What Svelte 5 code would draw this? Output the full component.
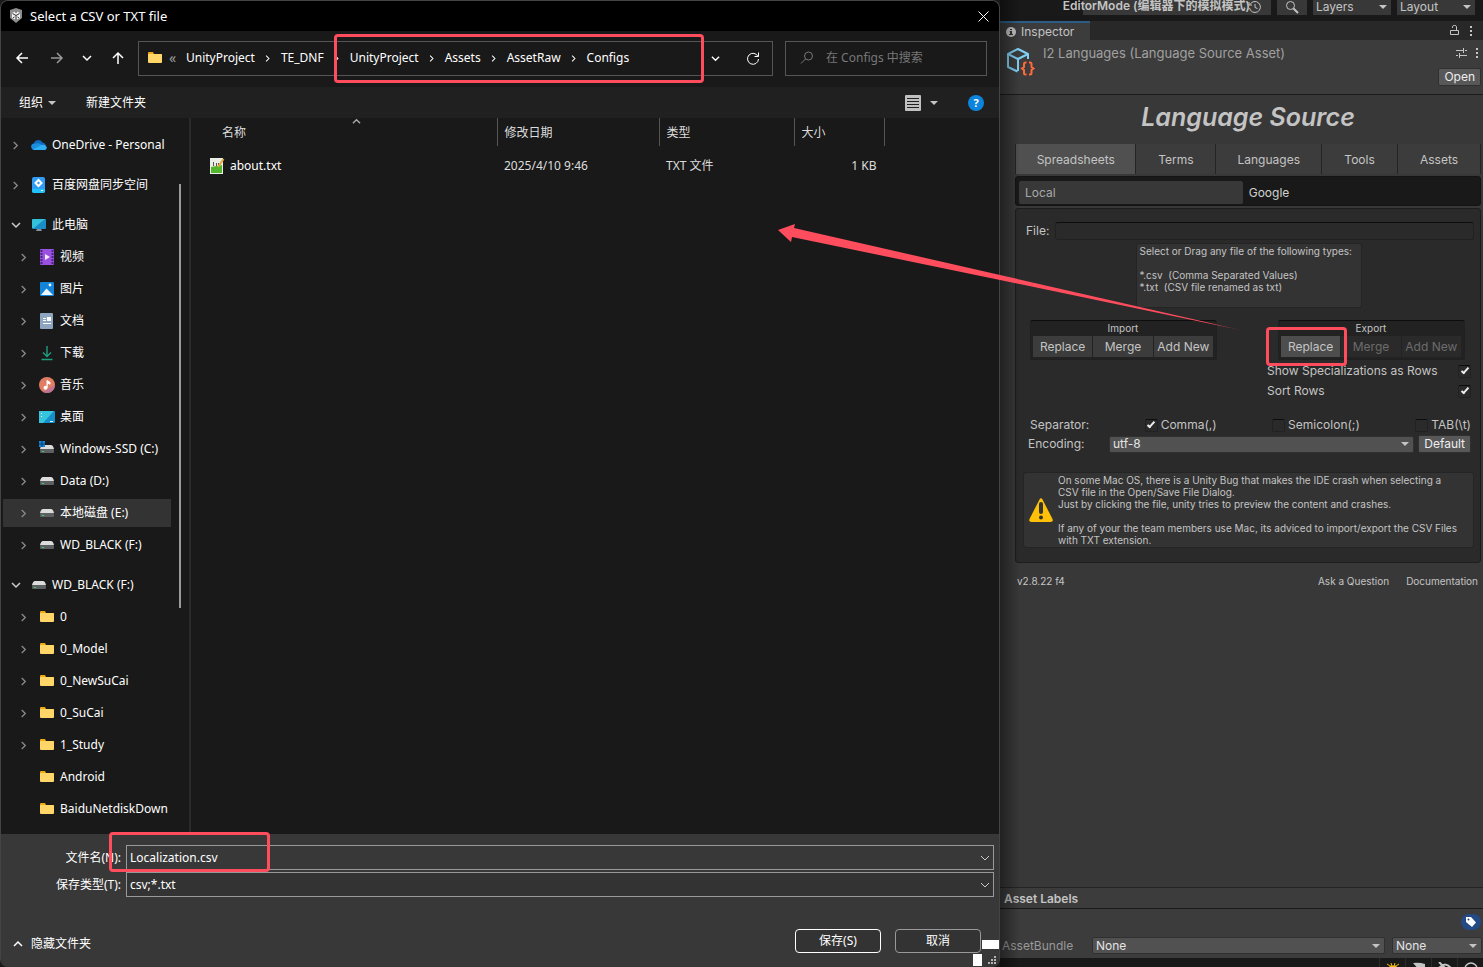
<script lang="ts">
	type TreeItem = { label: string; icon: string; state?: 'open' | 'closed' | 'none'; selected?: boolean };

	const treeGroups: TreeItem[][] = [
		[{ label: 'OneDrive - Personal', icon: 'cloud' }],
		[{ label: '百度网盘同步空间', icon: 'baidu' }],
		[
			{ label: '此电脑', icon: 'pc', state: 'open' },
			{ label: '视频', icon: 'video' },
			{ label: '图片', icon: 'picture' },
			{ label: '文档', icon: 'document' },
			{ label: '下载', icon: 'download' },
			{ label: '音乐', icon: 'music' },
			{ label: '桌面', icon: 'desktop' },
			{ label: 'Windows-SSD (C:)', icon: 'ssd' },
			{ label: 'Data (D:)', icon: 'drive' },
			{ label: '本地磁盘 (E:)', icon: 'drive', selected: true },
			{ label: 'WD_BLACK (F:)', icon: 'drive' }
		],
		[
			{ label: 'WD_BLACK (F:)', icon: 'drive', state: 'open' },
			{ label: '0', icon: 'folder' },
			{ label: '0_Model', icon: 'folder' },
			{ label: '0_NewSuCai', icon: 'folder' },
			{ label: '0_SuCai', icon: 'folder' },
			{ label: '1_Study', icon: 'folder' },
			{ label: 'Android', icon: 'folder', state: 'none' },
			{ label: 'BaiduNetdiskDown', icon: 'folder', state: 'none' }
		]
	];

	const crumbs = ['UnityProject', 'TE_DNF', 'UnityProject', 'Assets', 'AssetRaw', 'Configs'];
	const pageTabs = [
		{ label: 'Spreadsheets', grow: 121 },
		{ label: 'Terms', grow: 80 },
		{ label: 'Languages', grow: 106 },
		{ label: 'Tools', grow: 76 },
		{ label: 'Assets', grow: 83 }
	];
	const actions = ['Replace', 'Merge', 'Add New'];

	let fileName = $state('Localization.csv');
	let search = $state('');
	let csvPath = $state('');
	let activeTab = $state('Spreadsheets');
	let showSpecializations = $state(true);
	let sortRows = $state(true);
	let separator = $state(',');
</script>

{#snippet icon(name: string)}
	<svg class="icon" width="16" height="16" viewBox="0 0 16 16" aria-hidden="true">
		{#if name === 'cloud'}
			<path d="M3.5 13A3.5 3.5 0 0 1 2.6 6.2A5 5 0 0 1 11.5 5.4A4 4 0 0 1 12.5 13Z" fill="#0f6cbd" />
			<path d="M3.5 13A3.5 3.5 0 0 1 1 7.5L7 6L15.5 10A3 3 0 0 1 12.5 13Z" fill="#1b8fe0" />
			<path d="M2 12.5L10 8.2A4 4 0 0 1 15.8 10.5A2.7 2.7 0 0 1 13 13H3.5Z" fill="#2fb0f5" />
		{:else if name === 'baidu'}
			<rect x="1" y="0" width="13" height="16" rx="2" fill="#2f9df7" />
			<path d="M1 12h13v2a2 2 0 0 1-2 2H3a2 2 0 0 1-2-2z" fill="#20c3ff" />
			<path d="M7.5 3l3 3-3 3-3-3z" fill="none" stroke="#fff" stroke-width="2" />
			<rect x="10" y="13" width="2" height="1" fill="#fff" />
		{:else if name === 'pc'}
			<rect x="1" y="2" width="14" height="10" rx="1" fill="#1a8cc8" />
			<path d="M2 2h12L3 11H1V3z" fill="#33c1da" />
			<path d="M6 12h4l1 2H5z" fill="#8a8f94" />
		{:else if name === 'video'}
			<rect x="1" y="0" width="14" height="16" rx="1" fill="#9b51e0" />
			<path d="M2.5 1v14M13.5 1v14" stroke="#4b2480" stroke-width="2" stroke-dasharray="2 1" />
			<path d="M6 5v6l5-3z" fill="#f3e8ff" />
		{:else if name === 'picture'}
			<rect x="1" y="1" width="14" height="14" rx="1" fill="#1484d8" />
			<path d="M2 14l5.5-6.5L14 14z" fill="#eef7ff" />
			<circle cx="11" cy="4" r="1.4" fill="#eef7ff" />
		{:else if name === 'document'}
			<rect x="1" y="0" width="13" height="16" rx="1" fill="#8ea6bf" />
			<path d="M4 5.5h3M4 7.5h3M4 10.5h8" stroke="#fff" />
			<rect x="8" y="4" width="4" height="4" fill="#fff" />
		{:else if name === 'download'}
			<path d="M8 1v10M4 7.5l4 4 4-4M2.5 14.5h11" fill="none" stroke="#1f9e7e" stroke-width="1.4" />
		{:else if name === 'music'}
			<circle cx="8" cy="8" r="8" fill="#e07d62" />
			<path d="M16 8a8 8 0 0 1-12 7z" fill="#b070a8" opacity="0.7" />
			<circle cx="6.5" cy="10.7" r="2" fill="#fff" />
			<path d="M8 11V3.5l3 1.8v2L9 6" fill="#fff" stroke="#fff" />
		{:else if name === 'desktop'}
			<rect x="0" y="2" width="16" height="12" rx="1" fill="#158fca" />
			<path d="M0 2h15L4 14H0z" fill="#36c5dc" />
			<path d="M2 4.5h1M2 7.5h1M11 12.5h3" stroke="#eafcff" />
		{:else if name === 'ssd' || name === 'drive'}
			<path d="M4 4h8q2 0 3 4H1q1-4 3-4z" fill="#dcdcdc" />
			<rect x="1" y="8" width="14" height="4" rx="1" fill="#5e6163" />
			<rect x="3" y="10" width="2" height="1" fill="#3fd65a" />
			{#if name === 'ssd'}
				<path d="M0 0h6v6H0z" fill="#1683d8" />
				<path d="M3 0v6M0 3h6" stroke="#0b3f6c" />
			{/if}
		{:else if name === 'folder'}
			<path d="M1 3q0-1 1-1h4l1 2h7q1 0 1 1v2H1z" fill="#f0a81c" />
			<rect x="1" y="4" width="14" height="9" rx="1" fill="#ffd667" />
		{:else if name === 'text-file'}
			<path d="M1 0h13v16H1z" fill="#e9efe6" />
			<path d="M2 9l11-2v8H2z" fill="#53b52b" />
			<path d="M4.5 4v4M7.5 5v3M9.5 5v3" stroke="#555" />
			<path d="M14.5 1L9 9" stroke="#e5a93b" stroke-width="2" />
		{/if}
	</svg>
{/snippet}

{#snippet chevron(dir: string, size: number)}
	<svg class="chevron {dir}" width={size} height={size} viewBox="0 0 10 10" aria-hidden="true">
		<path d="M1 3l4 4 4-4" />
	</svg>
{/snippet}

{#snippet kebab()}
	<svg width="4" height="12" viewBox="0 0 4 12" aria-hidden="true">
		<path d="M1 1h2v2H1zM1 5h2v2H1zM1 9h2v2H1z" fill="#c4c4c4" />
	</svg>
{/snippet}

<div class="screen">
	<section class="dialog">
		<header class="title-bar">
			<svg width="14" height="16" viewBox="0 0 14 16" aria-hidden="true">
				<path d="M1 2l6-2 6 2v8l-6 5-6-5z" fill="#8d8d8d" />
				<path d="M7 3l4 2v5l-4 2-4-2V5z" fill="#efefef" />
				<path d="M3.5 5.5L7 7.5l3.5-2M7 7.5V12M7 3v2M4 10l1.5-1M10 10L8.5 9" stroke="#333" fill="none" />
			</svg>
			<h1>Select a CSV or TXT file</h1>
			<button class="close" aria-label="关闭">
				<svg width="11" height="11" viewBox="0 0 11 11"><path d="M.5.5l10 10M10.5.5l-10 10" stroke="#fff" /></svg>
			</button>
		</header>

		<nav class="nav-bar">
			<button class="wide" aria-label="返回">
				<svg width="14" height="14" viewBox="0 0 14 14"><path d="M13 7H2M7 2L2 7l5 5" /></svg>
			</button>
			<button class="forward dim" aria-label="前进">
				<svg width="14" height="14" viewBox="0 0 14 14"><path d="M1 7h11M7 2l5 5-5 5" /></svg>
			</button>
			<button class="narrow" aria-label="最近浏览的位置">{@render chevron('down', 10)}</button>
			<button class="wide" aria-label="上移">
				<svg width="14" height="14" viewBox="0 0 14 14"><path d="M7 13V2M2 7l5-5 5 5" /></svg>
			</button>
			<div class="address">
				{@render icon('folder')}
				<span class="overflow">«</span>
				{#each crumbs as crumb, i}
					{#if i > 0}
						<span class="crumb-sep">{@render chevron('right', 7)}</span>
					{/if}
					<a href="#{crumb}">{crumb}</a>
				{/each}
				<div class="address-tools">
					<button aria-label="以前的位置">{@render chevron('down', 9)}</button>
					<button class="refresh" aria-label="刷新">
						<svg width="14" height="14" viewBox="0 0 14 14"><path d="M12 5.5A5.5 5.5 0 1 0 12.5 8M12.5 1.5v4h-4" /></svg>
					</button>
				</div>
				<div class="mark mark-path"></div>
			</div>
			<label class="search">
				<svg width="14" height="14" viewBox="0 0 14 14"><circle cx="8.5" cy="5" r="4" /><path d="M5.5 8L1 12.5" /></svg>
				<input type="text" placeholder="在 Configs 中搜索" aria-label="搜索" bind:value={search} />
			</label>
		</nav>

		<div class="command-bar">
			<button>组织 <span class="caret"></span></button>
			<button>新建文件夹</button>
			<button class="view" aria-label="更改视图">
				<svg width="16" height="16" viewBox="0 0 16 16">
					<rect width="16" height="16" rx="1" fill="#c0c0c0" />
					<path d="M2 3.5h12M2 6.5h12M2 9.5h12M2 12.5h12" stroke="#202020" />
				</svg>
				<span class="caret"></span>
			</button>
			<button class="help" aria-label="帮助">?</button>
		</div>

		<div class="browser">
			<aside>
				<div class="tree">
					{#each treeGroups as group, g}
						<ul>
							{#each group as item, i}
								<li class:child={g > 1 && i > 0} class:selected={item.selected}>
									<span class="twist {item.state ?? 'closed'}">
										{@render chevron(item.state === 'open' ? 'down' : 'right', item.state === 'open' ? 10 : 9)}
									</span>
									{@render icon(item.icon)}
									<span class="name">{item.label}</span>
								</li>
							{/each}
						</ul>
					{/each}
				</div>
				<div class="scroll-thumb"></div>
			</aside>

			<div class="files">
				<table>
					<thead>
						<tr>
							<th class="col-name">名称<span class="sort">{@render chevron('up', 9)}</span></th>
							<th class="col-date">修改日期</th>
							<th class="col-type">类型</th>
							<th class="col-size">大小</th>
						</tr>
					</thead>
					<tbody>
						<tr>
							<td class="file-name"><span>{@render icon('text-file')}about.txt</span></td>
							<td>2025/4/10 9:46</td>
							<td>TXT 文件</td>
							<td class="size">1 KB</td>
						</tr>
					</tbody>
				</table>
			</div>
		</div>

		<footer class="save-area">
			<div class="save-fields">
				<label for="file-name">文件名(N):</label>
				<div class="combo">
					<input id="file-name" type="text" bind:value={fileName} />
					{@render chevron('down', 10)}
				</div>
				<label for="file-type">保存类型(T):</label>
				<div class="combo type">
					<select id="file-type"><option>csv;*.txt</option></select>
					{@render chevron('down', 10)}
				</div>
				<div class="mark mark-name"></div>
			</div>
			<div class="save-actions">
				<button class="hide-folders">{@render chevron('up', 10)}隐藏文件夹</button>
				<button class="action primary">保存(S)</button>
				<button class="action">取消</button>
			</div>
			<i class="patch patch-side"></i>
			<i class="patch patch-bottom"></i>
			<svg class="grip" width="8" height="8" viewBox="0 0 8 8" aria-hidden="true">
				<path d="M6 0h2v2H6zM6 3h2v2H6zM6 6h2v2H6zM3 3h2v2H3zM3 6h2v2H3zM0 6h2v2H0z" fill="#b4b4b4" />
			</svg>
		</footer>
	</section>

	<section class="inspector">
		<div class="editor-bar">
			<strong>EditorMode (编辑器下的模拟模式)</strong>
			<button class="history" aria-label="History">
				<svg width="14" height="14" viewBox="0 0 14 14"><path d="M2 4.5A5.5 5.5 0 1 1 1.5 8M1 2v3h3M7 4v3.5l2.5 1" /></svg>
			</button>
			<button class="find" aria-label="Search">
				<svg width="14" height="14" viewBox="0 0 14 14"><circle cx="5.5" cy="5.5" r="4" /><path d="M8.5 8.5l4.5 4.5" stroke-width="2" /></svg>
			</button>
			<div class="drop"><select aria-label="Layers"><option>Layers</option></select><span class="caret"></span></div>
			<div class="drop"><select aria-label="Layout"><option>Layout</option></select><span class="caret"></span></div>
		</div>

		<div class="dock-tabs">
			<button class="dock-tab">
				<svg width="10" height="10" viewBox="0 0 10 10"><circle cx="5" cy="5" r="5" fill="#c4c4c4" /><path d="M4 2h2v1H4zM4 4h2v3h1v1H3V7h1V5H3.5z" fill="#333" /></svg>
				Inspector
			</button>
			<svg class="lock" width="9" height="11" viewBox="0 0 9 11" aria-hidden="true">
				<path d="M.5 5.5h8v4h-8zM2.5 3V1.5q0-1 2-1t2 1v4" fill="none" stroke="#c4c4c4" />
			</svg>
			{@render kebab()}
		</div>

		<header class="asset-header">
			<svg width="30" height="30" viewBox="0 0 30 30" aria-hidden="true">
				<path d="M11.5 24.5L2 20V7l10-5 10 5v5M2 7l10 5 10-5M12 12v12" fill="none" stroke="#7fd0f5" stroke-width="2" stroke-linejoin="round" />
				<path d="M20.5 15.500h-1q-1.500 0-1.500 1.500v3l-2 1.500 2 1.500v3q0 1.500 1.500 1.500h1M23 15.500h1q1.500 0 1.500 1.500v3l2 1.500-2 1.500v3q0 1.500-1.500 1.500h-1" fill="none" stroke="#ff6a3a" stroke-width="2" />
			</svg>
			<h2>I2 Languages (Language Source Asset)</h2>
			<div class="asset-tools">
				<div class="asset-icons">
					<svg width="11" height="10" viewBox="0 0 11 10" aria-hidden="true"><path d="M0 2.5h7M9 2.5h2M7.500 0v5M0 7.500h2M4 7.500h7M3.500 5v5" stroke="#c4c4c4" /></svg>
					{@render kebab()}
				</div>
				<button class="unity-btn">Open</button>
			</div>
		</header>

		<div class="content">
			<h3>Language Source</h3>
			<div class="page-tabs">
				{#each pageTabs as tab}
					<button style="flex-grow: {tab.grow}" class:active={tab.label === activeTab} onclick={() => (activeTab = tab.label)}>
						{tab.label}
					</button>
				{/each}
			</div>
			<div class="source-tabs">
				<button class="active">Local</button>
				<button>Google</button>
			</div>

			<div class="panel">
				<div class="file-row">
					<label for="csv-path">File:</label>
					<input id="csv-path" type="text" bind:value={csvPath} />
				</div>
				<pre class="hint">Select or Drag any file of the following types:

*.csv  (Comma Separated Values)
*.txt  (CSV file renamed as txt)</pre>

				<div class="transfer">
					<fieldset class="transfer-box">
						<legend>Import</legend>
						<div>
							{#each actions as action}
								<button>{action}</button>
							{/each}
						</div>
					</fieldset>
					<fieldset class="transfer-box">
						<legend>Export</legend>
						<div>
							{#each actions as action, i}
								<button class:hover={i === 0} disabled={i > 0}>{action}</button>
							{/each}
						</div>
						<div class="mark mark-replace"></div>
					</fieldset>
				</div>

				<div class="options">
					<label>Show Specializations as Rows <input type="checkbox" bind:checked={showSpecializations} /></label>
					<label>Sort Rows <input type="checkbox" bind:checked={sortRows} /></label>
				</div>

				<div class="separator-row">
					<span>Separator:</span>
					<label><input type="checkbox" checked={separator === ','} onchange={() => (separator = ',')} />Comma(,)</label>
					<label><input type="checkbox" checked={separator === ';'} onchange={() => (separator = ';')} />Semicolon(;)</label>
					<label><input type="checkbox" checked={separator === '\t'} onchange={() => (separator = '\t')} />TAB(\t)</label>
				</div>
				<div class="encoding-row">
					<label for="encoding">Encoding:</label>
					<div class="drop light"><select id="encoding"><option>utf-8</option></select><span class="caret"></span></div>
					<button class="unity-btn">Default</button>
				</div>

				<div class="warning">
					<svg width="24" height="24" viewBox="0 0 24 24" aria-hidden="true">
						<path d="M10.5 1.5q1.5-2.5 3 0L23.5 21q1 3-2 3h-19q-3 0-2-3z" fill="#ffc107" />
						<path d="M12 6v8" stroke="#333" stroke-width="4" stroke-linecap="round" />
						<circle cx="12" cy="19.5" r="2" fill="#333" />
					</svg>
					<p>
						On some Mac OS, there is a Unity Bug that makes the IDE crash when selecting a<br />CSV file in the Open/Save File Dialog.<br />
						Just by clicking the file, unity tries to preview the content and crashes.<br /><br />
						If any of your the team members use Mac, its adviced to import/export the CSV Files<br />with TXT extension.
					</p>
				</div>
			</div>

			<div class="links">
				<span>v2.8.22 f4</span>
				<a href="#ask">Ask a Question</a>
				<a href="#docs">Documentation</a>
			</div>
		</div>

		<div class="asset-labels">
			<h4>Asset Labels</h4>
			<button class="tag" aria-label="Labels">
				<svg width="10" height="10" viewBox="0 0 10 10"><path d="M0 0h5l5 5.5L6 10 0 5z" fill="#fff" /><circle cx="2.5" cy="2.5" r="1" fill="#234a85" /></svg>
			</button>
			<div class="bundle">
				<label for="bundle">AssetBundle</label>
				<div class="drop light"><select id="bundle"><option>None</option></select><span class="caret"></span></div>
				<div class="drop light variant"><select aria-label="Variant"><option>None</option></select><span class="caret"></span></div>
			</div>
		</div>

		<div class="status">
			<span><svg width="14" height="14" viewBox="0 0 14 14"><path d="M1 2l3 2M13 2l-3 2M4 4h6v8H4zM0 7h14M5 1l1 3M9 1L8 4" fill="#f5b80c" stroke="#f5b80c" /></svg></span>
			<span><svg width="14" height="14" viewBox="0 0 14 14"><path d="M1 1q6-1 12 1v4l-5 3z" fill="#c4c4c4" /></svg></span>
			<span><svg width="14" height="14" viewBox="0 0 14 14"><path d="M1 6q6-7 12 0M1 0l12 12" fill="none" stroke="#c4c4c4" stroke-width="2" /></svg></span>
			<span><svg width="14" height="14" viewBox="0 0 14 14"><circle cx="7" cy="7" r="6" fill="none" stroke="#c4c4c4" stroke-width="1.5" /></svg></span>
		</div>
	</section>

	<svg class="arrow" width="468" height="110" viewBox="0 0 468 110" aria-hidden="true">
		<defs>
			<linearGradient id="fade"><stop offset="0.93" stop-color="#ff4d5e" /><stop offset="1" stop-color="#ff4d5e" stop-opacity="0.1" /></linearGradient>
		</defs>
		<path d="M0 6L17 0L16 4L222 51L467 107L222 56L14 13L13 18Z" fill="url(#fade)" />
	</svg>
</div>

<style>
	:global(body) {
		margin: 0;
		background: #191919;
	}

	.screen {
		position: relative;
		display: grid;
		grid-template-columns: minmax(0, 1000fr) minmax(0, 483fr);
		min-height: 100vh;
		overflow: hidden;
		color: #fff;
		font-family: 'Noto Sans', 'Noto Sans CJK SC', sans-serif;
		font-size: 12px;
		line-height: 16px;
	}

	.screen * {
		box-sizing: border-box;
	}

	button,
	input,
	select {
		margin: 0;
		padding: 0;
		border: 0;
		border-radius: 0;
		background: none;
		color: inherit;
		font: inherit;
		appearance: none;
		outline: none;
	}

	a {
		color: inherit;
		text-decoration: none;
	}

	svg {
		display: block;
		flex: none;
	}

	h1,
	h2,
	h3,
	h4,
	p,
	pre,
	ul {
		margin: 0;
		padding: 0;
		font-size: inherit;
		font-weight: 400;
	}

	.chevron path {
		fill: none;
		stroke: currentColor;
		stroke-width: 1.5;
	}

	.chevron.right {
		transform: rotate(-90deg);
	}

	.chevron.up {
		transform: rotate(180deg);
	}

	.caret {
		flex: none;
		border: 4px solid transparent;
		border-top-color: #c4c4c4;
		border-bottom-width: 0;
	}

	.mark {
		position: absolute;
		border: 3px solid #ff4d5e;
		border-radius: 4px;
		pointer-events: none;
	}

	/* Save dialog */
	.dialog {
		display: flex;
		flex-direction: column;
		overflow: hidden;
		border: 1px solid #444;
		border-bottom: 0;
		border-radius: 8px;
		background: #191919;
	}

	.title-bar {
		display: flex;
		align-items: center;
		gap: 7px;
		height: 30px;
		padding: 0 10px 0 8px;
		background: #000;
	}

	h1 {
		font-size: 13px;
	}

	.close {
		margin-left: auto;
	}

	.nav-bar {
		display: flex;
		align-items: center;
		height: 56px;
		padding: 0 12px 2px 3px;
	}

	.nav-bar button {
		display: grid;
		place-items: center;
		height: 32px;
	}

	.nav-bar svg {
		fill: none;
		stroke: currentColor;
		stroke-width: 1.5;
	}

	.nav-bar .icon {
		stroke: none;
	}

	.wide {
		width: 36px;
	}

	.forward {
		width: 34px;
	}

	.narrow {
		width: 26px;
	}

	.dim {
		color: #999;
	}

	.address {
		position: relative;
		display: flex;
		flex: 1;
		align-items: center;
		height: 35px;
		margin-left: 2px;
		padding-left: 8px;
		border: 1px solid #555;
	}

	.overflow {
		width: 23px;
		padding-left: 6px;
		color: #999;
		font-size: 14px;
	}

	.crumb-sep {
		display: grid;
		place-items: center;
		width: 26px;
	}

	.address-tools {
		display: flex;
		margin-left: auto;
	}

	.address-tools button {
		width: 38px;
	}

	.address-tools .refresh svg {
		stroke-width: 1;
	}

	.mark-path {
		top: -8px;
		left: 195px;
		width: 370px;
		height: 49px;
	}

	.search {
		display: flex;
		align-items: center;
		width: 202px;
		height: 35px;
		margin-left: 12px;
		padding-left: 14px;
		border: 1px solid #555;
		color: #777;
	}

	.search input {
		width: 150px;
		margin-left: 12px;
	}

	.search input::placeholder {
		color: #777;
		opacity: 1;
	}

	.search svg {
		stroke-width: 1;
	}

	.command-bar {
		display: flex;
		align-items: center;
		gap: 30px;
		height: 31px;
		padding: 0 15px 0 18px;
		background: #202020;
	}

	.command-bar button {
		display: flex;
		align-items: center;
		gap: 5px;
	}

	.command-bar .view {
		gap: 9px;
		margin-left: auto;
	}

	.command-bar .help {
		justify-content: center;
		width: 16px;
		height: 16px;
		border-radius: 50%;
		background: #0c83dc;
		font-size: 11px;
		font-weight: 700;
	}

	.browser {
		display: flex;
		flex: 1;
	}

	aside {
		display: flex;
		width: 190px;
		border-right: 2px solid #2a2a2a;
	}

	.tree {
		width: 170px;
		padding: 13px 0 10px 2px;
		overflow: hidden;
	}

	.scroll-thumb {
		width: 2px;
		height: 424px;
		margin: 66px 0 0 8px;
		background: #9a9a9a;
	}

	ul {
		display: grid;
		gap: 4px;
		margin-bottom: 12px;
		list-style: none;
	}

	ul:last-child {
		margin-bottom: 0;
	}

	li {
		display: flex;
		align-items: center;
		height: 28px;
		padding-left: 7px;
		white-space: nowrap;
	}

	li.child {
		padding-left: 15px;
	}

	li.selected {
		background: #333;
	}

	.twist {
		display: grid;
		place-items: center;
		width: 11px;
		margin-right: 10px;
		color: #888;
	}

	.twist.open {
		color: #ccc;
	}

	.twist.none {
		visibility: hidden;
	}

	.name {
		margin-left: 5px;
	}

	table {
		width: 694px;
		border-collapse: collapse;
		table-layout: fixed;
	}

	th {
		position: relative;
		height: 28px;
		padding: 2px 0 0 7px;
		border-right: 1px solid #555;
		color: #ddd;
		font-weight: 400;
		text-align: left;
	}

	.col-name {
		width: 306px;
		padding-left: 31px;
	}

	.col-date {
		width: 162px;
	}

	.col-type {
		width: 135px;
	}

	.sort {
		position: absolute;
		top: -1px;
		left: 161px;
		color: #aaa;
	}

	td {
		height: 38px;
		padding: 2px 0 0 7px;
		color: #ddd;
	}

	td.file-name {
		padding-left: 18px;
		color: #fff;
	}

	.file-name span {
		display: flex;
		align-items: center;
		gap: 5px;
	}

	td.size {
		padding-right: 8px;
		text-align: right;
	}

	.save-area {
		position: relative;
		height: 133px;
		padding: 11px 5px 0 0;
		background: #383838;
	}

	.save-fields {
		position: relative;
		display: grid;
		grid-template-columns: 120px 1fr;
		align-items: center;
		gap: 2px 5px;
	}

	.save-fields label {
		text-align: right;
	}

	.combo {
		display: flex;
		align-items: center;
		height: 25px;
		padding: 0 3px;
		border: 1px solid #999;
		color: #ccc;
	}

	.combo.type {
		background: #333;
	}

	.combo .chevron path {
		stroke-width: 1;
	}

	.combo input,
	.combo select {
		flex: 1;
		color: #fff;
	}

	.mark-name {
		top: -13px;
		left: 108px;
		width: 161px;
		height: 40px;
	}

	.save-actions {
		display: flex;
		align-items: center;
		gap: 14px;
		margin-top: 32px;
		padding-right: 13px;
	}

	.hide-folders {
		display: flex;
		align-items: center;
		gap: 8px;
		margin-right: auto;
		padding: 5px 0 0 12px;
	}

	.action {
		width: 86px;
		height: 24px;
		border: 1px solid #999;
		border-radius: 4px;
		background: #333;
	}

	.action.primary {
		border-color: #fff;
	}

	.patch {
		position: absolute;
		background: #fff;
	}

	.patch-side {
		right: 0;
		bottom: 18px;
		width: 17px;
		height: 9px;
	}

	.patch-bottom {
		right: 17px;
		bottom: 1px;
		width: 9px;
		height: 12px;
	}

	.grip {
		position: absolute;
		right: 3px;
		bottom: 3px;
	}

	/* Unity inspector */
	.inspector {
		position: relative;
		display: flex;
		flex-direction: column;
		background: #383838;
		color: #c4c4c4;
		font-family: Inter, 'Noto Sans CJK SC', sans-serif;
	}

	.inspector::before {
		position: absolute;
		inset: 0 auto 0 0;
		width: 20px;
		background: linear-gradient(90deg, rgba(0, 0, 0, 0.4), transparent);
		content: '';
		pointer-events: none;
	}

	.editor-bar {
		display: flex;
		justify-content: flex-end;
		gap: 6px;
		height: 21px;
		padding: 0 8px 6px 0;
		background: #191919;
	}

	.editor-bar strong {
		z-index: 1;
		margin-right: -173px;
		font-weight: 600;
		line-height: 12px;
		white-space: nowrap;
	}

	.editor-bar button {
		background: #383838;
	}

	.editor-bar svg {
		margin: -1px auto 0;
		fill: none;
		stroke: #c4c4c4;
	}

	.history {
		width: 188px;
	}

	.editor-bar .history svg {
		margin-right: 9px;
	}

	.find {
		width: 30px;
	}

	.drop {
		position: relative;
		display: flex;
		align-items: center;
		width: 78px;
		padding: 0 4px 0 3px;
		background: #383838;
	}

	.drop select {
		flex: 1;
		min-width: 0;
	}

	.editor-bar .drop {
		padding-bottom: 2px;
	}

	.drop.light {
		height: 17px;
		border: 1px solid #303030;
		border-radius: 2px;
		background: #515151;
		color: #e4e4e4;
	}

	.dock-tabs {
		display: flex;
		align-items: center;
		gap: 10px;
		height: 19px;
		padding-right: 10px;
		background: #282828;
	}

	.dock-tab {
		display: flex;
		align-items: center;
		gap: 5px;
		width: 90px;
		height: 19px;
		padding-left: 6px;
		border-top: 2px solid #2c5d87;
		background: #3c3c3c;
	}

	.lock {
		margin-left: auto;
	}

	.asset-header {
		display: flex;
		height: 55px;
		padding: 7px 2px 0 6px;
		border-bottom: 1px solid #1a1a1a;
		background: #3c3c3c;
	}

	.asset-header h2 {
		margin: -2px 0 0 7px;
		color: #a0a0a0;
		font-size: 13px;
	}

	.asset-tools {
		display: grid;
		gap: 9px;
		align-content: start;
		justify-items: end;
		margin-left: auto;
	}

	.asset-icons {
		display: flex;
		align-items: center;
		gap: 8px;
		padding-right: 2px;
	}

	.unity-btn {
		height: 18px;
		padding: 0 5px;
		border: 1px solid #303030;
		border-radius: 2px;
		background: #585858;
		color: #eee;
	}

	.content {
		padding: 6px 2px 0 15px;
	}

	h3 {
		color: #c4c4c4;
		font-size: 25px;
		font-style: italic;
		font-weight: 600;
		line-height: 32px;
		text-align: center;
	}

	.page-tabs {
		display: flex;
		margin-top: 11px;
		border-left: 1px solid #242424;
	}

	.page-tabs button {
		flex-basis: 0;
		height: 30px;
		padding-top: 2px;
		border-right: 1px solid #242424;
		background: #3c3c3c;
	}

	.page-tabs .active {
		background: #505050;
	}

	.source-tabs {
		display: flex;
		height: 30px;
		margin-top: 2px;
		padding: 4px 2px 1px 3px;
		border: 1px solid #141414;
		border-radius: 3px;
		background: #191919;
	}

	.source-tabs button {
		flex: 236;
		padding-left: 6px;
		color: #d2d2d2;
		text-align: left;
	}

	.source-tabs .active {
		flex: 224;
		border-radius: 2px;
		background: #383838;
		color: #a8a8a8;
	}

	.panel {
		margin-top: 2px;
		padding: 13px 6px 14px 7px;
		border: 1px solid #1d1d1d;
		border-radius: 3px;
		background: #2a2a2a;
	}

	.file-row {
		display: flex;
		align-items: center;
		gap: 6px;
		padding-left: 3px;
	}

	.file-row input {
		flex: 1;
		height: 18px;
		border: 1px solid #212121;
		border-top-color: #0d0d0d;
		border-radius: 3px;
	}

	.hint {
		width: 226px;
		height: 65px;
		margin: 3px auto 0;
		padding: 1px 0 0 3px;
		border: 1px solid #242424;
		border-radius: 3px;
		background: #333;
		font-family: inherit;
		font-size: 10px;
		line-height: 12px;
	}

	.transfer {
		display: flex;
		justify-content: space-between;
		margin-top: 12px;
		padding: 0 9px 0 7px;
	}

	.transfer-box {
		position: relative;
		width: 187px;
		margin: 0;
		padding: 0 3px 2px 2px;
		border: 1px solid #202020;
		border-top-color: #0d0d0d;
		border-radius: 3px;
		background: #222;
	}

	.transfer-box legend {
		float: left;
		width: 100%;
		padding: 0;
		font-size: 10px;
		line-height: 15px;
		text-align: center;
	}

	.transfer-box > div:not(.mark) {
		display: flex;
		clear: both;
		gap: 1px;
	}

	.transfer-box button {
		flex: 1;
		height: 21px;
		padding-top: 1px;
		background: #3c3c3c;
	}

	.transfer-box button:disabled {
		background: #2a2a2a;
		color: #6c6c6c;
	}

	.transfer-box .hover {
		background: #4d4d4d;
	}

	.mark-replace {
		top: 6px;
		left: -13px;
		width: 81px;
		height: 39px;
	}

	.options {
		display: grid;
		gap: 4px;
		width: 204px;
		margin: 3px 3px 0 auto;
	}

	.options label {
		display: flex;
		align-items: center;
		justify-content: space-between;
		white-space: nowrap;
	}

	input[type='checkbox'] {
		display: grid;
		place-items: center;
		width: 13px;
		height: 13px;
		border: 1px solid #212121;
		border-top-color: #0d0d0d;
		border-radius: 2px;
	}

	input[type='checkbox']:checked::before {
		width: 6px;
		height: 2px;
		border-bottom: 2px solid #eee;
		border-left: 2px solid #eee;
		content: '';
		transform: translateY(-1px) rotate(-48deg);
	}

	.separator-row {
		display: flex;
		justify-content: space-between;
		margin-top: 18px;
		padding: 0 3px 0 7px;
	}

	.separator-row label {
		display: flex;
		align-items: center;
		gap: 3px;
	}

	.encoding-row {
		display: flex;
		align-items: center;
		gap: 4px;
		margin-top: 2px;
		padding: 0 3px 0 5px;
	}

	.encoding-row label {
		width: 77px;
	}

	.encoding-row .drop {
		flex: 1;
	}

	.warning {
		display: flex;
		align-items: center;
		gap: 5px;
		margin-top: 19px;
		padding: 1px 0 1px 5px;
		border: 1px solid #242424;
		border-radius: 3px;
		background: #333;
		font-size: 10px;
		line-height: 12px;
		white-space: nowrap;
	}

	.links {
		display: flex;
		gap: 17px;
		margin-top: 10px;
		padding: 0 3px 0 2px;
		font-size: 10px;
	}

	.links span {
		margin-right: auto;
	}

	.asset-labels {
		margin-top: auto;
		border-top: 1px solid #242424;
		background: #3c3c3c;
	}

	h4 {
		height: 21px;
		padding-left: 4px;
		border-bottom: 1px solid #1a1a1a;
		font-weight: 600;
		line-height: 21px;
	}

	.tag {
		display: grid;
		place-items: center;
		width: 20px;
		height: 16px;
		margin: 5px 2px 0 auto;
		border-radius: 8px;
		background: #234a85;
	}

	.bundle {
		display: flex;
		align-items: center;
		gap: 7px;
		padding: 7px 1px 4px 2px;
	}

	.bundle label {
		width: 83px;
		color: #999;
	}

	.bundle .drop {
		flex: 284;
	}

	.bundle .variant {
		flex: 81;
	}

	.status {
		display: flex;
		justify-content: flex-end;
		height: 9px;
		overflow: hidden;
		background: #191919;
	}

	.status span {
		display: grid;
		justify-items: center;
		width: 26px;
		padding-top: 4px;
		border-left: 1px solid #2c2c2c;
	}

	.arrow {
		position: absolute;
		top: 224px;
		right: 237px;
		pointer-events: none;
	}
</style>
